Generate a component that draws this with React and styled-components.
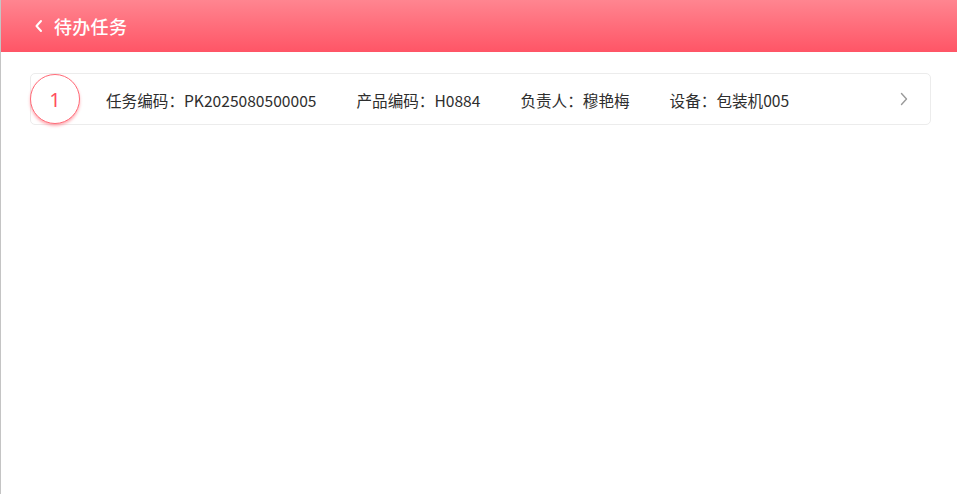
import React from 'react';
import styled, { createGlobalStyle } from 'styled-components';

const GlobalStyle = createGlobalStyle`
    html, body {
        margin: 0;
        padding: 0;
        background: #fff;
        font-family: "Noto Sans CJK SC", "Noto Sans", sans-serif;
    }
    * { box-sizing: border-box; }
`;

const Page = styled.div`
    min-height: 494px;
    width: 958px;
    border-left: 1px solid #c4c4c4;
    background: #fff;
`;

const Header = styled.header`
    display: flex;
    align-items: center;
    height: 52px;
    width: 956px;
    padding-left: 31px;
    background: linear-gradient(180deg, #ff8590 0%, #ff5566 100%);
    color: #fff;
`;

const BackButton = styled.button`
    display: flex;
    align-items: center;
    justify-content: center;
    width: 12px;
    height: 20px;
    padding: 0;
    margin-right: 10px;
    border: 0;
    background: transparent;
    cursor: pointer;
`;

const Title = styled.h1`
    margin: 0;
    font-size: 18px;
    font-weight: 500;
    letter-spacing: 0.3px;
`;

const TaskList = styled.section`
    display: flex;
    flex-direction: column;
    gap: 12px;
    padding: 21px 27px 0 29px;
`;

const TaskCard = styled.div`
    display: flex;
    align-items: center;
    height: 52px;
    border: 1px solid #ececec;
    border-radius: 5px;
    background: #fff;
    padding-right: 22px;
    cursor: pointer;
`;

const Index = styled.div`
    display: flex;
    align-items: center;
    justify-content: center;
    flex-shrink: 0;
    width: 50px;
    height: 50px;
    margin-left: -1px;
    border-radius: 50%;
    border: 1px solid #ff6b78;
    background: #fff;
    box-shadow: 0 2px 3px rgba(255, 80, 95, 0.45);
    color: #ff4d5e;
    font-size: 20px;
    font-family: "Noto Sans", sans-serif;
`;

const Fields = styled.div`
    display: flex;
    align-items: center;
    flex: 1;
    gap: 40px;
    margin-left: 26px;
    padding-top: 1px;
`;

const Field = styled.span`
    font-size: 15.6px;
    color: #2e2e2e;
    white-space: nowrap;
`;

const Chevron = styled.span`
    display: flex;
    align-items: center;
    color: #9a9a9a;
`;

const tasks = [
    {
        id: 1,
        code: 'PK2025080500005',
        product: 'H0884',
        owner: '穆艳梅',
        device: '包装机005',
    },
];

export default function App() {
    return (
        <>
            <GlobalStyle />
            <Page>
                <Header>
                    <BackButton aria-label="返回">
                        <svg width="9" height="14" viewBox="0 0 9 14" fill="none">
                            <path d="M7 2L2.5 7L7 12" stroke="#fff" strokeWidth="2" strokeLinecap="round" strokeLinejoin="round" />
                        </svg>
                    </BackButton>
                    <Title>待办任务</Title>
                </Header>

                <TaskList>
                    {tasks.map((task, index) => (
                        <TaskCard key={task.id}>
                            <Index>{index + 1}</Index>
                            <Fields>
                                <Field>任务编码：{task.code}</Field>
                                <Field>产品编码：{task.product}</Field>
                                <Field>负责人：{task.owner}</Field>
                                <Field>设备：{task.device}</Field>
                            </Fields>
                            <Chevron>
                                <svg width="8" height="14" viewBox="0 0 8 14" fill="none">
                                    <path d="M1.5 1.5L6.5 7L1.5 12.5" stroke="currentColor" strokeWidth="1.4" strokeLinecap="round" strokeLinejoin="round" />
                                </svg>
                            </Chevron>
                        </TaskCard>
                    ))}
                </TaskList>
            </Page>
        </>
    );
}
